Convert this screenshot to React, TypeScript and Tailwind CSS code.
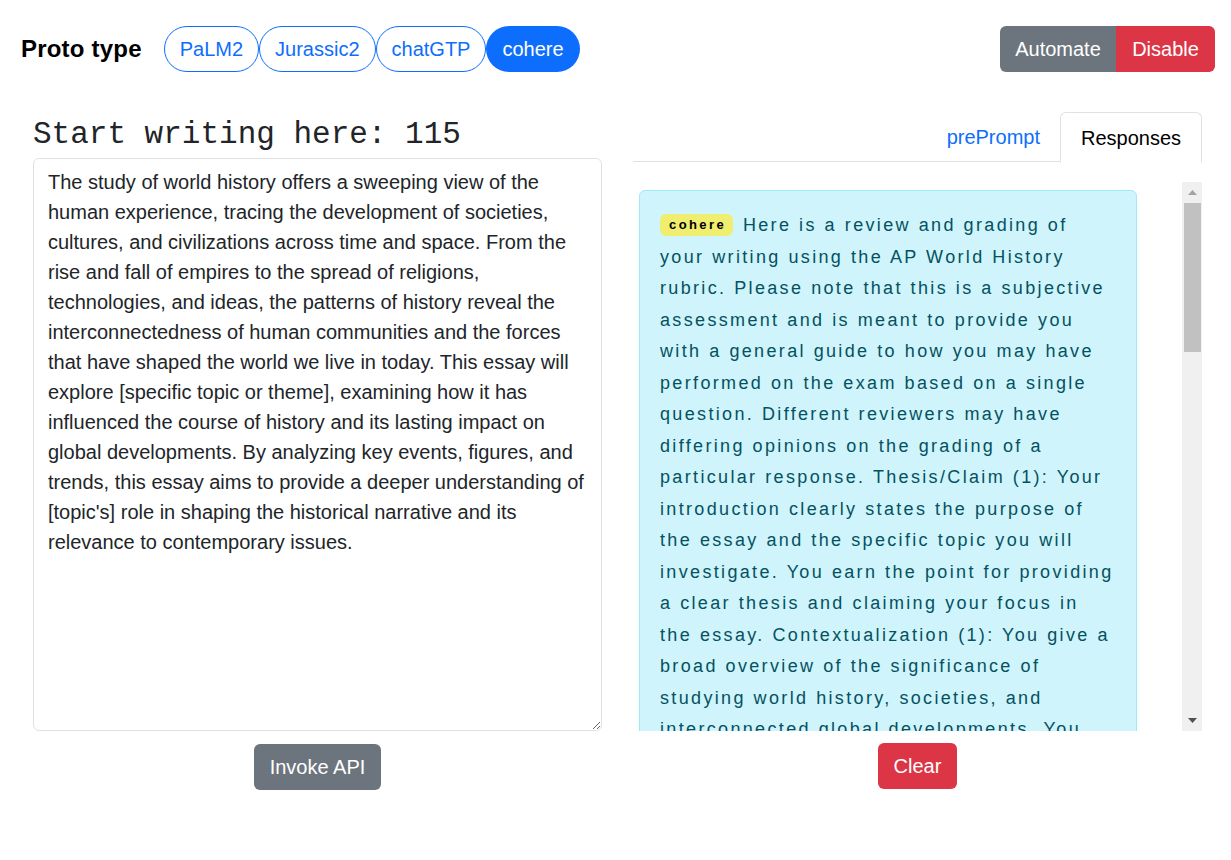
import React from "react";

const essay =
  "The study of world history offers a sweeping view of the human experience, tracing the development of societies, cultures, and civilizations across time and space. From the rise and fall of empires to the spread of religions, technologies, and ideas, the patterns of history reveal the interconnectedness of human communities and the forces that have shaped the world we live in today. This essay will explore [specific topic or theme], examining how it has influenced the course of history and its lasting impact on global developments. By analyzing key events, figures, and trends, this essay aims to provide a deeper understanding of [topic's] role in shaping the historical narrative and its relevance to contemporary issues.";

const response =
  "Here is a review and grading of your writing using the AP World History rubric. Please note that this is a subjective assessment and is meant to provide you with a general guide to how you may have performed on the exam based on a single question. Different reviewers may have differing opinions on the grading of a particular response. Thesis/Claim (1): Your introduction clearly states the purpose of the essay and the specific topic you will investigate. You earn the point for providing a clear thesis and claiming your focus in the essay. Contextualization (1): You give a broad overview of the significance of studying world history, societies, and interconnected global developments. You earn the point for contextualization. Evidence (0): The essay does not yet provide specific historical evidence to support the argument.";

export default function App() {
  const pills = ["PaLM2", "Jurassic2", "chatGTP"];
  return (
    <div className="w-[1231px] h-[860px] bg-white font-['Liberation_Sans',Arial,sans-serif] text-[#212529]">
      <div className="flex items-center justify-between pt-[26px] pl-[21px] pr-[16px]">
        <div className="flex items-center">
          <div className="text-[24px] font-bold text-black mr-[22px] tracking-[0.2px]">Proto type</div>
          {pills.map((p) => (
            <div
              key={p}
              className="h-[46px] px-[15px] flex items-center rounded-full border border-[#0d6efd] text-[#0d6efd] text-[20px]"
            >
              {p}
            </div>
          ))}
          <div className="h-[46px] px-[16px] flex items-center rounded-full bg-[#0d6efd] text-white text-[20px]">
            cohere
          </div>
        </div>
        <div className="flex rounded-[6px] overflow-hidden text-[20px] text-white">
          <div className="h-[46px] w-[116px] flex items-center justify-center bg-[#6c757d]">Automate</div>
          <div className="h-[46px] w-[99px] flex items-center justify-center bg-[#dc3545]">Disable</div>
        </div>
      </div>

      <div className="flex pt-[40px]">
        <div className="ml-[33px] w-[569px] flex flex-col">
          <div className="h-[46px] flex items-center font-['Liberation_Mono','Courier_New',monospace] text-[31px] text-[#212529]">
            Start writing here: 115
          </div>
          <textarea
            defaultValue={essay}
            className="h-[573px] w-full border border-[#dee2e6] rounded-[6px] px-[14px] py-[8px] text-[20px] leading-[30px] text-[#212529] outline-none"
          />
          <div className="flex justify-center mt-[13px]">
            <div className="h-[46px] px-[16px] flex items-center rounded-[6px] bg-[#6c757d] text-white text-[20px]">
              Invoke API
            </div>
          </div>
        </div>

        <div className="ml-[31px] w-[569px] flex flex-col">
          <div className="h-[50px] flex justify-end border-b border-[#dee2e6]">
            <div className="h-[50px] pl-[16px] pr-[20px] flex items-center text-[20px] text-[#0d6efd]">prePrompt</div>
            <div className="h-[51px] w-[142px] -mb-px flex items-center justify-center text-[20px] text-black bg-white border border-[#dee2e6] border-b-white rounded-t-[6px]">
              Responses
            </div>
          </div>
          <div className="mt-[20px] h-[549px] flex">
            <div className="flex-1 overflow-hidden">
              <div className="ml-[6px] mt-[8px] w-[498px] bg-[#cff4fc] border border-[#9eeaf9] rounded-[6px] pl-[20px] pr-[19px] pt-[19px] pb-[20px]">
                <p className="text-[18px] leading-[31.5px] tracking-[0.13em] [word-spacing:0.5px] text-[#055160]">
                  <span className="inline-block bg-[#f0ee6e] text-black font-bold text-[13px] leading-[22px] tracking-[2.4px] pl-[9px] pr-[7px] mr-[2px] rounded-[6px] align-[2px]">
                    cohere
                  </span>{" "}
                  {response}
                </p>
              </div>
            </div>
            <div className="w-[20px] bg-[#f0f0f0] flex flex-col items-center">
              <div className="h-[21px] w-full flex items-center justify-center">
                <svg width="9" height="5" viewBox="0 0 9 5">
                  <polygon points="0,5 9,5 4.5,0" fill="#a3a3a3" />
                </svg>
              </div>
              <div className="w-[17px] h-[149px] bg-[#c1c1c1]" />
              <div className="flex-1" />
              <div className="h-[21px] w-full flex items-center justify-center">
                <svg width="9" height="5" viewBox="0 0 9 5">
                  <polygon points="0,0 9,0 4.5,5" fill="#505050" />
                </svg>
              </div>
            </div>
          </div>
          <div className="flex justify-center mt-[12px]">
            <div className="h-[46px] px-[16px] flex items-center rounded-[6px] bg-[#dc3545] text-white text-[20px]">
              Clear
            </div>
          </div>
        </div>
      </div>
    </div>
  );
}
